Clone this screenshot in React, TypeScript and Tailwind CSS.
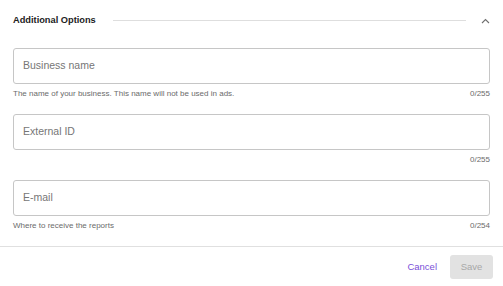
import React from "react";

function Field({ label, helper, count }: { label: string; helper?: string; count: string }) {
  return (
    <div className="flex flex-col">
      <div className="h-[36px] border border-[#c6c6c6] rounded-[3px] flex items-center pl-[9px]">
        <span className="text-[10.5px] text-[#767676]">{label}</span>
      </div>
      <div className="mt-[5px] h-[10px] flex items-center justify-between text-[8px] leading-[10px] text-[#6b6b6b]">
        <span>{helper ?? ""}</span>
        <span>{count}</span>
      </div>
    </div>
  );
}

export default function App() {
  return (
    <div
      className="w-[503px] h-[286px] bg-white flex flex-col"
      style={{ fontFamily: '"Liberation Sans", Arial, sans-serif' }}
    >
      <div className="h-[41px] flex items-center px-[13px]">
        <span className="text-[9.25px] font-bold text-[#222222]">Additional Options</span>
        <div className="flex-1 h-px bg-[#dedede] ml-[17px]" />
        <svg className="ml-[15px]" width="9" height="6" viewBox="0 0 9 6" fill="none">
          <path d="M1 5 L4.5 1.5 L8 5" stroke="#6f6f6f" strokeWidth="1.1" />
        </svg>
      </div>
      <div className="px-[13px] pt-[7px] flex flex-col gap-[15px]">
        <Field
          label="Business name"
          helper="The name of your business. This name will not be used in ads."
          count="0/255"
        />
        <Field label="External ID" count="0/255" />
        <Field label="E-mail" helper="Where to receive the reports" count="0/254" />
      </div>
      <div className="mt-[15px] h-px bg-[#e0e0e0]" />
      <div className="flex items-start justify-end px-[10px] pt-[8px]">
        <button className="text-[9.5px] text-[#7a4fd8] mr-[13px] h-[24px]">Cancel</button>
        <button className="w-[43px] h-[24px] rounded-[3px] bg-[#e2e2e2] text-[9.5px] text-[#a8a8a8]">
          Save
        </button>
      </div>
    </div>
  );
}
